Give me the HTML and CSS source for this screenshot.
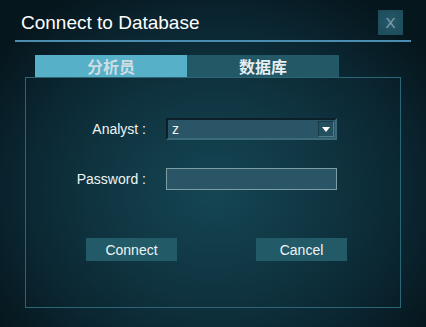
FILE: index.html
```html
<!DOCTYPE html>
<html lang="en">
<head>
  <meta charset="UTF-8" />
  <title>Connect to Database</title>
  <link rel="stylesheet" href="styles.css">
</head>
<body>
  <div class="dialog">
    <div class="header">
      <h1>Connect to Database</h1>
      <button class="close">X</button>
    </div>

    <div class="content">
      <div class="tabs">
        <div class="tab active">分析员</div>
        <div class="tab">数据库</div>
      </div>

      <div class="panel">
        <div class="form">
          <label>Analyst :</label>
          <div class="select">
            <span class="select-value">z</span>
            <span class="select-arrow">
              <svg width="8" height="5" viewBox="0 0 8 5"><path d="M0 0H8L4 5Z" fill="#fff"/></svg>
            </span>
          </div>
          <label>Password :</label>
          <input type="password" class="password" />
        </div>

        <div class="actions">
          <button class="btn">Connect</button>
          <button class="btn">Cancel</button>
        </div>
      </div>
    </div>
  </div>
</body>
</html>
```

FILE: styles.css
```css
* { box-sizing: border-box; }

html, body { height: 100%; }

body {
  margin: 0;
  font-family: 'Liberation Sans', Arial, sans-serif;
  color: #eef4f5;
  background: radial-gradient(ellipse 62% 70% at 50% 58%, #154654 0%, #0f3440 45%, #0a2530 75%, #06161d 100%);
  overflow: hidden;
}

.dialog {
  width: 426px;
  height: 327px;
}

.header {
  margin: 0 15px;
  height: 42px;
  padding: 10px 8px 5px 6px;
  display: flex;
  justify-content: space-between;
  align-items: center;
  border-bottom: 2px solid #4a8db0;
}

h1 {
  margin: 0;
  font-size: 19px;
  font-weight: normal;
  line-height: 22px;
  color: #fff;
}

.close {
  width: 25px;
  height: 25px;
  padding: 0;
  border: none;
  background: radial-gradient(circle, #26596a, #1c4a58);
  color: #7fa2ab;
  font-family: 'Liberation Sans', Arial, sans-serif;
  font-size: 15px;
  line-height: 25px;
}

.content {
  margin: 13px 25px 0;
}

.tabs {
  display: flex;
  padding-left: 10px;
}

.tab {
  width: 152px;
  height: 22px;
  line-height: 22px;
  text-align: center;
  font-family: 'Noto Sans CJK SC', sans-serif;
  font-weight: bold;
  font-size: 16px;
  background: #235966;
  color: #e4eef2;
}

.tab.active {
  background: #55b0c8;
  color: #cfdde2;
}

.panel {
  height: 231px;
  border: 1px solid #2c6676;
  padding-top: 40px;
}

.form {
  display: grid;
  grid-template-columns: 120px 171px;
  column-gap: 20px;
  row-gap: 28px;
  align-items: center;
}

label {
  text-align: right;
  font-size: 14px;
  color: #eef4f5;
}

.select {
  height: 22px;
  display: flex;
  align-items: center;
  background: #2a5567;
  border: 2px solid;
  border-color: #0b2029 #3b6b79 #3b6b79 #0b2029;
}

.select-value {
  flex: 1;
  padding-left: 4px;
  font-size: 14px;
  line-height: 16px;
}

.select-arrow {
  width: 16px;
  height: 16px;
  margin-right: 1px;
  display: flex;
  align-items: center;
  justify-content: center;
  background: #23505e;
  border: 1px solid;
  border-color: #173c47 #4c7e8b #4c7e8b #173c47;
}

.password {
  height: 22px;
  width: 171px;
  margin: 0;
  background: #2a5567;
  border: 1px solid #7c9da3;
  color: #fff;
}

.actions {
  display: flex;
  gap: 79px;
  padding-left: 60px;
  margin-top: 48px;
}

.btn {
  width: 91px;
  height: 23px;
  padding: 0;
  border: none;
  background: #225a68;
  color: #eef4f5;
  font-family: 'Liberation Sans', Arial, sans-serif;
  font-size: 14px;
}
```
